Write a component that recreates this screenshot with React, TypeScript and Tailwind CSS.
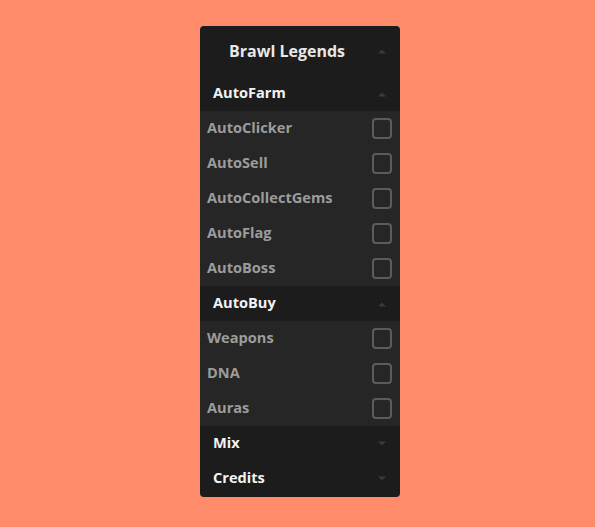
import React from "react";

type Section = { name: string; open: boolean; items: string[] };

const sections: Section[] = [
	{ name: "AutoFarm", open: true, items: ["AutoClicker", "AutoSell", "AutoCollectGems", "AutoFlag", "AutoBoss"] },
	{ name: "AutoBuy", open: true, items: ["Weapons", "DNA", "Auras"] },
	{ name: "Mix", open: false, items: [] },
	{ name: "Credits", open: false, items: [] },
];

function Arrow({ up }: { up: boolean }) {
	return (
		<svg width="10" height="6" viewBox="0 0 10 6" className="shrink-0">
			{up ? <path d="M1 5.5 L5 1.5 L9 5.5 Z" fill="#3a3a3a" /> : <path d="M1 0.5 L5 4.5 L9 0.5 Z" fill="#3a3a3a" />}
		</svg>
	);
}

export default function App() {
	return (
		<div className="w-[595px] h-[527px] bg-[#ff8b6a] flex pl-[200px] pt-[26px]" style={{ fontFamily: '"Open Sans", sans-serif' }}>
			<div className="w-[200px] h-[471px] rounded-[4px] overflow-hidden bg-[#1c1c1c] flex flex-col">
				<div className="h-[50px] shrink-0 flex items-center pl-[29px] pr-[13px]">
					<span className="flex-1 text-[16px] font-bold text-[#e8e8e8]">Brawl Legends</span>
					<Arrow up />
				</div>
				{sections.map((s) => (
					<div key={s.name} className="flex flex-col">
						<div className="h-[35px] flex items-center pl-[13px] pr-[13px]">
							<span className="flex-1 text-[14.6px] font-bold text-[#f2f2f2] -translate-y-[1px]">{s.name}</span>
							<Arrow up={s.open} />
						</div>
						{s.items.map((it) => (
							<div key={it} className="h-[35px] flex items-center bg-[#262626] pl-[7px] pr-[8px]">
								<span className="flex-1 text-[14.6px] font-bold text-[#9c9c9c] -translate-y-[1px]">{it}</span>
								<div className="w-[20px] h-[21px] rounded-[4px] border-2 border-[#5c5c5c]" />
							</div>
						))}
					</div>
				))}
			</div>
		</div>
	);
}
